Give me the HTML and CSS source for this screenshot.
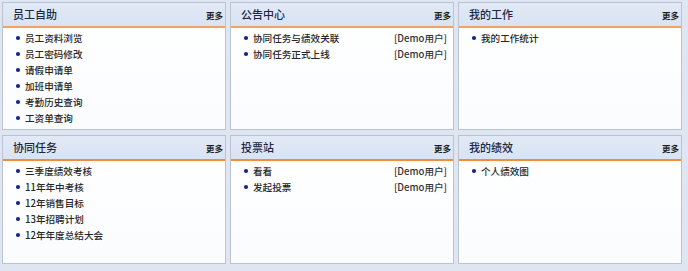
FILE: index.html
```html
<!DOCTYPE html>
<html lang="zh">
<head>
<meta charset="utf-8">
<link rel="stylesheet" href="styles.css">
</head>
<body>
<div class="grid">
  <section class="panel">
    <div class="head"><span class="title">员工自助</span><a class="more">更多</a></div>
    <ul class="list">
      <li><span>员工资料浏览</span></li>
      <li><span>员工密码修改</span></li>
      <li><span>请假申请单</span></li>
      <li><span>加班申请单</span></li>
      <li><span>考勤历史查询</span></li>
      <li><span>工资单查询</span></li>
    </ul>
  </section>
  <section class="panel">
    <div class="head"><span class="title">公告中心</span><a class="more">更多</a></div>
    <ul class="list">
      <li><span>协同任务与绩效关联</span><span class="who">[Demo用户]</span></li>
      <li><span>协同任务正式上线</span><span class="who">[Demo用户]</span></li>
    </ul>
  </section>
  <section class="panel">
    <div class="head"><span class="title">我的工作</span><a class="more">更多</a></div>
    <ul class="list">
      <li><span>我的工作统计</span></li>
    </ul>
  </section>
  <section class="panel lower">
    <div class="head"><span class="title">协同任务</span><a class="more">更多</a></div>
    <ul class="list">
      <li><span>三季度绩效考核</span></li>
      <li><span>11年年中考核</span></li>
      <li><span>12年销售目标</span></li>
      <li><span>13年招聘计划</span></li>
      <li><span>12年年度总结大会</span></li>
    </ul>
  </section>
  <section class="panel lower">
    <div class="head"><span class="title">投票站</span><a class="more">更多</a></div>
    <ul class="list">
      <li><span>看看</span><span class="who">[Demo用户]</span></li>
      <li><span>发起投票</span><span class="who">[Demo用户]</span></li>
    </ul>
  </section>
  <section class="panel lower">
    <div class="head"><span class="title">我的绩效</span><a class="more">更多</a></div>
    <ul class="list">
      <li><span>个人绩效图</span></li>
    </ul>
  </section>
</div>
</body>
</html>
```
FILE: styles.css
```css
html, body {
  margin: 0;
  padding: 0;
}
body {
  background: #dfe6f2;
  font-family: "Noto Sans CJK SC", "Noto Sans", sans-serif;
  color: #222;
  width: 688px;
  height: 271px;
  overflow: hidden;
}
.grid {
  display: grid;
  grid-template-columns: 224px 224px 224px;
  grid-template-rows: 128px 129px;
  column-gap: 4px;
  row-gap: 5px;
  padding: 2px 0 0 2px;
}
.panel {
  border: 1px solid #b9c3d3;
  background: linear-gradient(#ffffff, #fbfcfe);
  display: flex;
  flex-direction: column;
  box-sizing: border-box;
}
.head {
  box-sizing: border-box;
  height: 25px;
  background: linear-gradient(#e2e9f6, #d9e3f3);
  border-bottom: 2px solid #f3a35f;
  display: flex;
  align-items: center;
  justify-content: space-between;
  padding: 0 2px 2px 10px;
}
.lower .head {
  border-bottom-color: #f28d3c;
}
.title {
  font-size: 11px;
  color: #1c2842;
  font-weight: 500;
}
.more {
  font-size: 8.5px;
  font-weight: 700;
  color: #1e1e1e;
  margin-top: 3px;
}
.list {
  list-style: none;
  margin: 0;
  padding: 2px 6px 0 13px;
}
.list li {
  display: flex;
  align-items: center;
  height: 16px;
  font-size: 9.6px;
  font-weight: 500;
  color: #262626;
}
.list li::before {
  content: "";
  width: 3.5px;
  height: 3.5px;
  background: #1b2a8c;
  border-radius: 50%;
  margin-right: 5.5px;
  flex: none;
}
.list li .who {
  margin-left: auto;
  color: #333;
}
```
